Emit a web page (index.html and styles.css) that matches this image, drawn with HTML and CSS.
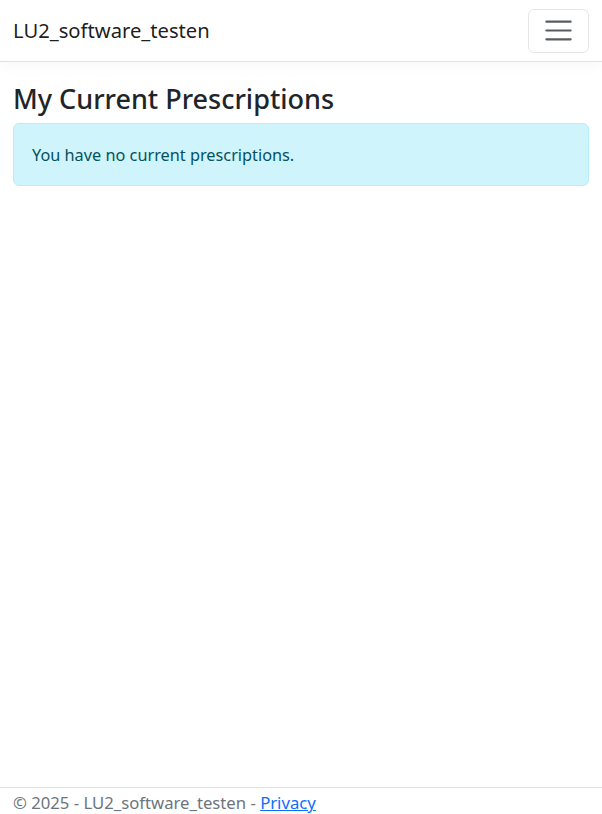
FILE: index.html
```html
<!DOCTYPE html>
<html lang="en">
<head>
<meta charset="utf-8">
<title>My Current Prescriptions - LU2_software_testen</title>
<link rel="stylesheet" href="styles.css">
</head>
<body>
<header class="navbar">
  <div class="nav-inner">
    <a class="brand" href="#">LU2_software_testen</a>
    <button class="toggler" type="button" aria-label="Toggle navigation">
      <svg class="toggler-icon" viewBox="0 0 30 30" width="33" height="33" aria-hidden="true">
        <path d="M4 7h22M4 15h22M4 23h22" stroke="rgba(33,37,41,0.75)" stroke-width="2" stroke-linecap="round" stroke-miterlimit="10"/>
      </svg>
    </button>
  </div>
</header>
<main class="container">
  <h2 class="title">My Current Prescriptions</h2>
  <div class="alert">You have no current prescriptions.</div>
</main>
<footer class="footer">
  <div class="footer-inner">&copy; 2025 - LU2_software_testen - <a href="#">Privacy</a></div>
</footer>
</body>
</html>
```
FILE: styles.css
```css
html, body {
  height: 100%;
}
body {
  margin: 0;
  display: flex;
  flex-direction: column;
  font-family: "Segoe UI", "Noto Sans", "Open Sans", Arial, sans-serif;
  font-size: 16.3px;
  line-height: 1.5;
  color: #212529;
  background: #fff;
  overflow: hidden;
}
.navbar {
  flex: 0 0 auto;
  border-bottom: 1px solid #dee2e6;
  box-shadow: 0 4px 13px rgba(0, 0, 0, 0.03);
  padding: 8.5px 0;
}
.nav-inner {
  display: flex;
  align-items: center;
  justify-content: space-between;
  padding: 0 13px;
}
.brand {
  color: rgba(0, 0, 0, 0.9);
  text-decoration: none;
  font-size: 20.2px;
  line-height: 1.5;
}
.toggler {
  display: flex;
  align-items: center;
  justify-content: center;
  width: 61px;
  height: 44px;
  padding: 0;
  background: transparent;
  border: 1px solid rgba(0, 0, 0, 0.1);
  border-radius: 6px;
}
.toggler-icon {
  display: block;
}
.container {
  flex: 1 1 auto;
  padding: 20px 13px 0;
}
.title {
  margin: 0 0 8px;
  font-size: 27px;
  font-weight: 500;
  line-height: 33px;
}
.alert {
  padding: 16.5px 18px;
  background: #cff4fc;
  border: 1px solid #b6effb;
  border-radius: 6px;
  color: #055160;
  line-height: 28px;
}
.footer {
  flex: none;
  height: 26px;
  border-top: 1px solid #dee2e6;
  color: #6c757d;
  font-size: 16.7px;
  line-height: 30px;
  white-space: nowrap;
}
.footer-inner {
  padding: 0 13px;
}
.footer a {
  color: #0d6efd;
}
```
